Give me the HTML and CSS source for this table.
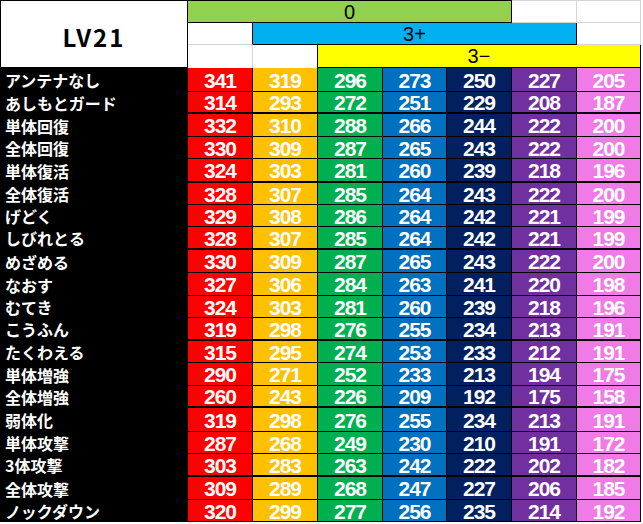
FILE: index.html
```html
<!DOCTYPE html>
<html lang="ja">
<head>
<meta charset="utf-8">
<title>LV21</title>
<link rel="stylesheet" href="styles.css">
</head>
<body>
<div class="sheet">
  <div class="lv">LV21</div>
  <div class="h h-green">0</div>
  <div class="h blank g-r1a"></div>
  <div class="h blank g-r1b"></div>
  <div class="h blank g-r2a"></div>
  <div class="h h-blue">3+</div>
  <div class="h blank g-r2b"></div>
  <div class="h blank g-r3a"></div>
  <div class="h blank g-r3b"></div>
  <div class="h h-yellow">3−</div>

  <div class="lab">アンテナなし</div><div class="n c1">341</div><div class="n c2">319</div><div class="n c3">296</div><div class="n c4">273</div><div class="n c5">250</div><div class="n c6">227</div><div class="n c7">205</div>
  <div class="lab sep">あしもとガード</div><div class="n c1 sep">314</div><div class="n c2 sep">293</div><div class="n c3 sep">272</div><div class="n c4 sep">251</div><div class="n c5 sep">229</div><div class="n c6 sep">208</div><div class="n c7 sep">187</div>
  <div class="lab">単体回復</div><div class="n c1">332</div><div class="n c2">310</div><div class="n c3">288</div><div class="n c4">266</div><div class="n c5">244</div><div class="n c6">222</div><div class="n c7">200</div>
  <div class="lab">全体回復</div><div class="n c1">330</div><div class="n c2">309</div><div class="n c3">287</div><div class="n c4">265</div><div class="n c5">243</div><div class="n c6">222</div><div class="n c7">200</div>
  <div class="lab sep">単体復活</div><div class="n c1 sep">324</div><div class="n c2 sep">303</div><div class="n c3 sep">281</div><div class="n c4 sep">260</div><div class="n c5 sep">239</div><div class="n c6 sep">218</div><div class="n c7 sep">196</div>
  <div class="lab">全体復活</div><div class="n c1">328</div><div class="n c2">307</div><div class="n c3">285</div><div class="n c4">264</div><div class="n c5">243</div><div class="n c6">222</div><div class="n c7">200</div>
  <div class="lab">げどく</div><div class="n c1">329</div><div class="n c2">308</div><div class="n c3">286</div><div class="n c4">264</div><div class="n c5">242</div><div class="n c6">221</div><div class="n c7">199</div>
  <div class="lab sep">しびれとる</div><div class="n c1 sep">328</div><div class="n c2 sep">307</div><div class="n c3 sep">285</div><div class="n c4 sep">264</div><div class="n c5 sep">242</div><div class="n c6 sep">221</div><div class="n c7 sep">199</div>
  <div class="lab">めざめる</div><div class="n c1">330</div><div class="n c2">309</div><div class="n c3">287</div><div class="n c4">265</div><div class="n c5">243</div><div class="n c6">222</div><div class="n c7">200</div>
  <div class="lab">なおす</div><div class="n c1">327</div><div class="n c2">306</div><div class="n c3">284</div><div class="n c4">263</div><div class="n c5">241</div><div class="n c6">220</div><div class="n c7">198</div>
  <div class="lab">むてき</div><div class="n c1">324</div><div class="n c2">303</div><div class="n c3">281</div><div class="n c4">260</div><div class="n c5">239</div><div class="n c6">218</div><div class="n c7">196</div>
  <div class="lab sep">こうふん</div><div class="n c1 sep">319</div><div class="n c2 sep">298</div><div class="n c3 sep">276</div><div class="n c4 sep">255</div><div class="n c5 sep">234</div><div class="n c6 sep">213</div><div class="n c7 sep">191</div>
  <div class="lab">たくわえる</div><div class="n c1">315</div><div class="n c2">295</div><div class="n c3">274</div><div class="n c4">253</div><div class="n c5">233</div><div class="n c6">212</div><div class="n c7">191</div>
  <div class="lab">単体増強</div><div class="n c1">290</div><div class="n c2">271</div><div class="n c3">252</div><div class="n c4">233</div><div class="n c5">213</div><div class="n c6">194</div><div class="n c7">175</div>
  <div class="lab sep">全体増強</div><div class="n c1 sep">260</div><div class="n c2 sep">243</div><div class="n c3 sep">226</div><div class="n c4 sep">209</div><div class="n c5 sep">192</div><div class="n c6 sep">175</div><div class="n c7 sep">158</div>
  <div class="lab">弱体化</div><div class="n c1">319</div><div class="n c2">298</div><div class="n c3">276</div><div class="n c4">255</div><div class="n c5">234</div><div class="n c6">213</div><div class="n c7">191</div>
  <div class="lab">単体攻撃</div><div class="n c1">287</div><div class="n c2">268</div><div class="n c3">249</div><div class="n c4">230</div><div class="n c5">210</div><div class="n c6">191</div><div class="n c7">172</div>
  <div class="lab sep">3体攻撃</div><div class="n c1 sep">303</div><div class="n c2 sep">283</div><div class="n c3 sep">263</div><div class="n c4 sep">242</div><div class="n c5 sep">222</div><div class="n c6 sep">202</div><div class="n c7 sep">182</div>
  <div class="lab">全体攻撃</div><div class="n c1">309</div><div class="n c2">289</div><div class="n c3">268</div><div class="n c4">247</div><div class="n c5">227</div><div class="n c6">206</div><div class="n c7">185</div>
  <div class="lab">ノックダウン</div><div class="n c1">320</div><div class="n c2">299</div><div class="n c3">277</div><div class="n c4">256</div><div class="n c5">235</div><div class="n c6">214</div><div class="n c7">192</div>
</div>
</body>
</html>
```

FILE: styles.css
```css
* { box-sizing: border-box; }
html, body { margin: 0; padding: 0; background: #ffffff; }

.sheet {
  display: grid;
  width: 641px;
  grid-template-columns: 188px 65px 65px 65px 64px 65px 65px 64px;
  grid-template-rows: 23px 22px 23px 24px 22px 23px 22px 24px 22px 22px 23px 23px 23px 22px 23px 22px 23px 22px 24px 22px 23px 23px 22px;
}

.lv {
  grid-column: 1;
  grid-row: 1 / 4;
  background: #fff;
  border: 1px solid #000;
  display: flex;
  align-items: center;
  justify-content: center;
  padding-top: 4px;
  font-family: "Noto Sans CJK JP", "DejaVu Sans", sans-serif;
  font-weight: 700;
  font-size: 24px;
  letter-spacing: 2px;
  color: #000;
}

.h {
  display: flex;
  align-items: center;
  justify-content: center;
  font-family: "Liberation Sans", "Noto Sans CJK JP", sans-serif;
  font-size: 20px;
  padding-top: 1px;
  color: #000;
}
.blank { background: #fff; border-right: 1px solid #d4d4d4; border-bottom: 1px solid #d4d4d4; }

.h-green { grid-column: 2 / 7; grid-row: 1; background: #92d050; border-top: 1px solid #000; border-right: 1px solid #000; border-bottom: 1px solid #000; }
.g-r1a { grid-column: 7; grid-row: 1; border-top: 1px solid #d4d4d4; }
.g-r1b { grid-column: 8; grid-row: 1; border-top: 1px solid #d4d4d4; }

.g-r2a { grid-column: 2; grid-row: 2; border-right: 1px solid #000; }
.h-blue { grid-column: 3 / 8; grid-row: 2; background: #00b0f0; border-right: 1px solid #000; border-bottom: 1px solid #000; }
.g-r2b { grid-column: 8; grid-row: 2; }

.g-r3a { grid-column: 2; grid-row: 3; border-bottom: 0; }
.g-r3b { grid-column: 3; grid-row: 3; border-right: 1px solid #000; border-bottom: 0; }
.h-yellow { grid-column: 4 / 9; grid-row: 3; background: #ffff00; border-right: 1px solid #000; border-bottom: 1px solid #000; }

.lab {
  background: #000;
  color: #fff;
  font-family: "Noto Sans CJK JP", sans-serif;
  font-weight: 700;
  font-size: 16px;
  display: flex;
  align-items: center;
  padding-left: 5px;
  padding-top: 1px;
  border-right: 1px solid #000;
  border-bottom: 1px solid #000;
  white-space: nowrap;
}

.n {
  color: #fff;
  font-family: "Liberation Sans", Arial, sans-serif;
  font-weight: 700;
  font-size: 21px;
  letter-spacing: -1px;
  display: flex;
  align-items: center;
  justify-content: center;
  padding-top: 2px;
  border-right: 1px solid #000;
  border-bottom: 1px solid #000;
}
.sep { border-bottom-width: 2px; }

.c1 { background: #ff0000; }
.c2 { background: #ffc000; }
.c3 { background: #00b050; }
.c4 { background: #0070c0; }
.c5 { background: #002060; }
.c6 { background: #7030a0; }
.c7 { background: #f07ae6; }
```
